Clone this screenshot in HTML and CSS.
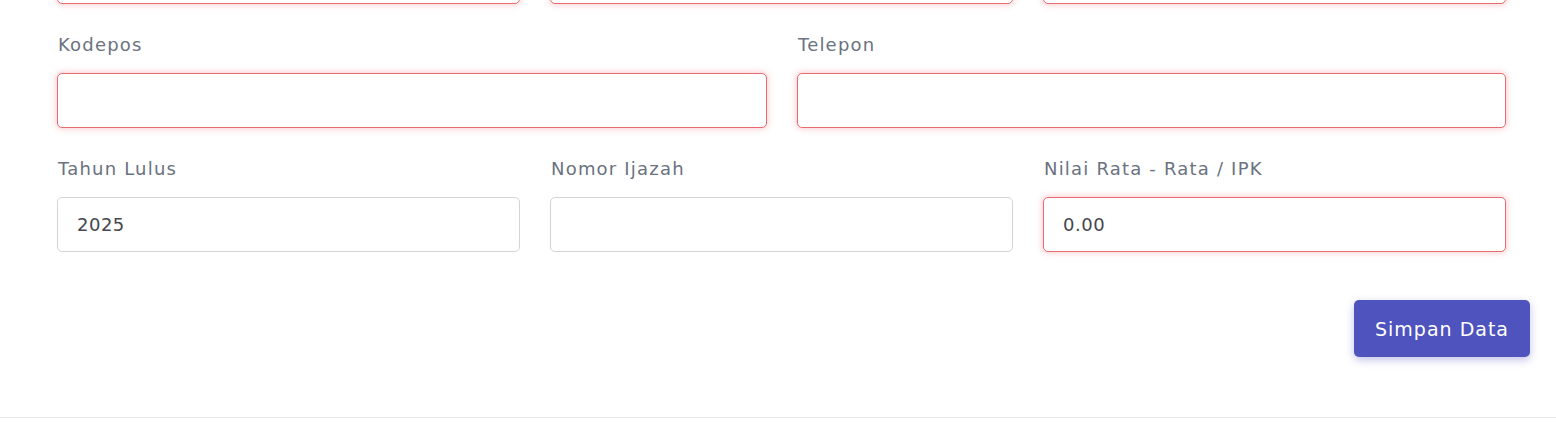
FILE: index.html
```html
<!DOCTYPE html>
<html lang="id">
<head>
<meta charset="utf-8">
<title>Form</title>
<link rel="stylesheet" href="styles.css">
</head>
<body>
<div class="page">
  <form class="form">
    <div class="row cols-3 row-first">
      <div class="field"><input class="input invalid" type="text"></div>
      <div class="field"><input class="input invalid" type="text"></div>
      <div class="field"><input class="input invalid" type="text"></div>
    </div>
    <div class="row cols-2">
      <div class="field">
        <label class="label">Kodepos</label>
        <input class="input invalid" type="text">
      </div>
      <div class="field">
        <label class="label">Telepon</label>
        <input class="input invalid" type="text">
      </div>
    </div>
    <div class="row cols-3">
      <div class="field">
        <label class="label">Tahun Lulus</label>
        <input class="input" type="text" value="2025">
      </div>
      <div class="field">
        <label class="label">Nomor Ijazah</label>
        <input class="input" type="text">
      </div>
      <div class="field">
        <label class="label">Nilai Rata - Rata / IPK</label>
        <input class="input invalid" type="text" value="0.00">
      </div>
    </div>
    <div class="actions">
      <button type="button" class="btn">Simpan Data</button>
    </div>
  </form>
  <div class="divider"></div>
</div>
</body>
</html>
```
FILE: styles.css
```css
* { box-sizing: border-box; }
html, body { margin: 0; padding: 0; background: #fff; }
body { font-family: "DejaVu Sans", "Open Sans", sans-serif; overflow: hidden; }
.page { width: 1556px; }
.form { padding: 0 26px 0 57px; margin-top: -51px; }
.row { display: grid; column-gap: 30px; margin-right: 24px; margin-bottom: 29px; }
.cols-3 { grid-template-columns: 463px 463px 463px; }
.cols-2 { grid-template-columns: 710px 709px; }
.field { display: flex; flex-direction: column; }
.label {
  display: block;
  height: 24px;
  line-height: 24px;
  margin: 0 0 16px 1px;
  font-size: 18px;
  color: #6b7280;
  letter-spacing: 1.2px;
}
.input {
  display: block;
  width: 100%;
  height: 55px;
  border: 1px solid #d4d4d8;
  border-radius: 5px;
  padding: 0 19px;
  font-family: inherit;
  font-size: 18px;
  letter-spacing: 0.5px;
  color: #45474d;
  background: #fff;
  outline: none;
}
.input.invalid {
  border-color: #ea6a72;
  box-shadow: 0 0 6px 1px rgba(239, 90, 100, 0.3);
}
.actions { display: flex; justify-content: flex-end; padding-top: 19px; margin-bottom: 60px; }
.btn {
  width: 176px;
  height: 57px;
  border: none;
  border-radius: 5px;
  background: #4f53bd;
  color: #fff;
  font-family: inherit;
  font-size: 19px;
  letter-spacing: 1px;
  box-shadow: 0 3px 8px rgba(79, 83, 189, 0.35);
  cursor: pointer;
}
.divider { height: 1px; background: #e8e8ec; }
```
